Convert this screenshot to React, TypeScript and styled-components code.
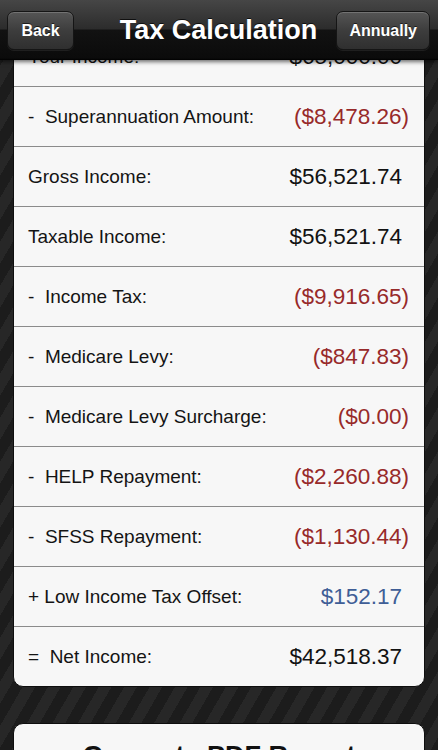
import React from "react";
import styled, { createGlobalStyle } from "styled-components";

const GlobalStyle = createGlobalStyle`
  html, body {
    margin: 0;
    padding: 0;
    background: #1e1e1e;
  }
  body {
    font-family: "Liberation Sans", Arial, Helvetica, sans-serif;
    -webkit-font-smoothing: antialiased;
  }
`;

const Screen = styled.div`
  width: 438px;
  height: 750px;
  overflow: hidden;
  display: flex;
  flex-direction: column;
  background-color: #1d1d1d;
  background-image: repeating-linear-gradient(
    120deg,
    #1c1c1c 0px,
    #1c1c1c 11px,
    #272727 11px,
    #272727 22px
  );
`;

const NavBar = styled.header`
  position: relative;
  z-index: 2;
  flex: 0 0 60px;
  height: 60px;
  display: grid;
  grid-template-columns: 1fr auto 1fr;
  align-items: center;
  padding: 0 8px 0 7px;
  background: linear-gradient(
    to bottom,
    #464646 0px,
    #2c2c2c 29px,
    #121212 30px,
    #0b0b0b 58px,
    #000 60px
  );
  box-shadow: 0 2px 4px rgba(0, 0, 0, 0.55);
`;

const NavButton = styled.button<{ $side: "left" | "right" }>`
  justify-self: ${(p) => (p.$side === "left" ? "start" : "end")};
  height: 39px;
  margin-top: 1px;
  padding: 0 ${(p) => (p.$side === "left" ? "13px" : "12px")};
  min-width: ${(p) => (p.$side === "left" ? "67px" : "93px")};
  border-radius: 7px;
  border: 1px solid #151515;
  background: linear-gradient(to bottom, #555 0%, #3d3d3d 50%, #2f2f2f 100%);
  box-shadow: inset 0 1px 0 rgba(255, 255, 255, 0.18),
    0 1px 0 rgba(255, 255, 255, 0.08);
  color: #fff;
  font-family: "Liberation Sans", Arial, sans-serif;
  font-weight: bold;
  font-size: 16px;
  text-shadow: 0 -1px 0 rgba(0, 0, 0, 0.6);
  cursor: pointer;
`;

const Title = styled.h1`
  margin: 0;
  color: #fff;
  font-family: "Liberation Sans", Arial, sans-serif;
  font-weight: bold;
  font-size: 27px;
  text-shadow: 0 -1px 0 rgba(0, 0, 0, 0.7);
  white-space: nowrap;
`;

const Content = styled.main`
  flex: 1;
  overflow: hidden;
  padding: 0 13px;
  display: flex;
  flex-direction: column;
  gap: 36px;
`;

const Card = styled.section<{ $offset?: number }>`
  margin-top: ${(p) => (p.$offset ? `${p.$offset}px` : "0")};
  background: #f7f7f7;
  border-radius: 10px;
  border: 1px solid #0e0e0e;
  overflow: hidden;
  flex-shrink: 0;
`;

const Row = styled.div`
  height: 60px;
  box-sizing: border-box;
  display: flex;
  align-items: center;
  justify-content: space-between;
  padding: 2px 15px 0 14px;
  & + & {
    border-top: 1px solid #8b8b8b;
    padding-top: 1px;
  }
`;

const Label = styled.span`
  font-size: 19px;
  color: #141414;
  white-space: pre;
`;

type Tone = "neg" | "pos" | "plain";

const Value = styled.span<{ $tone: Tone }>`
  font-size: 22.5px;
  white-space: pre;
  color: ${(p) =>
    p.$tone === "neg" ? "#972a2a" : p.$tone === "pos" ? "#3f5e96" : "#121212"};
  padding-right: ${(p) => (p.$tone === "neg" ? "0" : "7px")};
`;

const ActionCard = styled.button`
  flex-shrink: 0;
  height: 62px;
  width: 100%;
  background: #f7f7f7;
  border-radius: 10px;
  border: 1px solid #0e0e0e;
  font-family: "Liberation Sans", Arial, sans-serif;
  font-weight: bold;
  font-size: 27px;
  color: #111;
  padding: 4px 0 0;
  cursor: pointer;
`;

const rows: { label: string; value: string; tone: Tone }[] = [
  { label: "Your Income:", value: "$65,000.00", tone: "plain" },
  { label: "-  Superannuation Amount:", value: "($8,478.26)", tone: "neg" },
  { label: "Gross Income:", value: "$56,521.74", tone: "plain" },
  { label: "Taxable Income:", value: "$56,521.74", tone: "plain" },
  { label: "-  Income Tax:", value: "($9,916.65)", tone: "neg" },
  { label: "-  Medicare Levy:", value: "($847.83)", tone: "neg" },
  { label: "-  Medicare Levy Surcharge:", value: "($0.00)", tone: "neg" },
  { label: "-  HELP Repayment:", value: "($2,260.88)", tone: "neg" },
  { label: "-  SFSS Repayment:", value: "($1,130.44)", tone: "neg" },
  { label: "+ Low Income Tax Offset:", value: "$152.17", tone: "pos" },
  { label: "=  Net Income:", value: "$42,518.37", tone: "plain" },
];

export default function App() {
  return (
    <>
      <GlobalStyle />
      <Screen>
        <NavBar>
          <NavButton $side="left">Back</NavButton>
          <Title>Tax Calculation</Title>
          <NavButton $side="right">Annually</NavButton>
        </NavBar>
        <Content>
          <Card $offset={-35}>
            {rows.map((r) => (
              <Row key={r.label}>
                <Label>{r.label}</Label>
                <Value $tone={r.tone}>{r.value}</Value>
              </Row>
            ))}
          </Card>
          <ActionCard>Generate PDF Report</ActionCard>
        </Content>
      </Screen>
    </>
  );
}
